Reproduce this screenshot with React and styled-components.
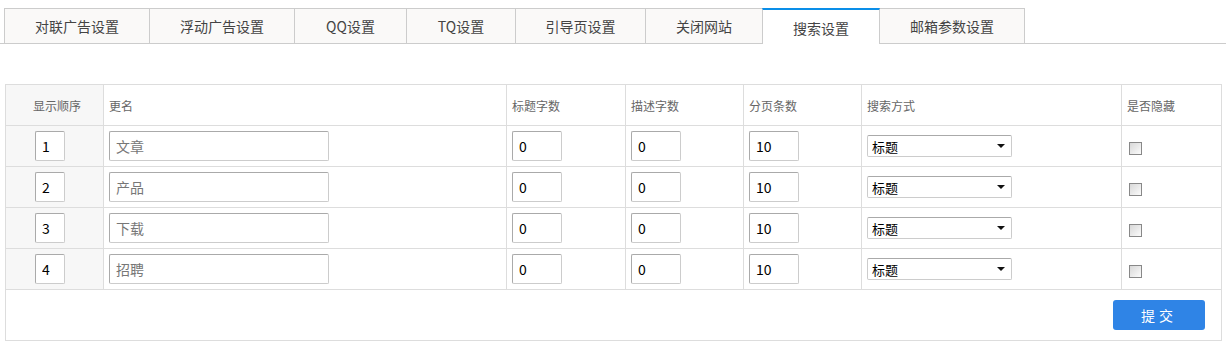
import React from 'react';
import styled, { createGlobalStyle } from 'styled-components';

const GlobalStyle = createGlobalStyle`
  body {
    margin: 0;
    background: #fff;
    font-family: "Microsoft YaHei", "Noto Sans CJK SC", "Noto Sans", sans-serif;
  }
`;

const TABS = [
  { label: '对联广告设置', width: 146 },
  { label: '浮动广告设置', width: 146 },
  { label: 'QQ设置', width: 113 },
  { label: 'TQ设置', width: 110 },
  { label: '引导页设置', width: 131 },
  { label: '关闭网站', width: 118 },
  { label: '搜索设置', width: 118, active: true },
  { label: '邮箱参数设置', width: 146 },
];

const ROWS = [
  { order: 1, name: '文章' },
  { order: 2, name: '产品' },
  { order: 3, name: '下载' },
  { order: 4, name: '招聘' },
];

const COLS = [98, 403, 119, 118, 118, 260, 100];

const Page = styled.div`
  padding-top: 8px;
`;

const TabBar = styled.div`
  display: flex;
  padding-left: 4px;
  border-bottom: 1px solid #ccc;
  height: 35px;
`;

const Tab = styled.div`
  box-sizing: border-box;
  width: ${p => p.w}px;
  height: ${p => (p.active ? 36 : 35)}px;
  margin-left: -1px;
  display: flex;
  align-items: center;
  justify-content: center;
  font-size: 14px;
  color: #444;
  background: ${p => (p.active ? '#fff' : '#faf9f8')};
  border: 1px solid #ccc;
  border-top: ${p => (p.active ? '2px solid #0a8ee8' : '1px solid #ccc')};
  border-bottom: none;
  padding-top: ${p => (p.active ? 2 : 0)}px;
  position: relative;
  z-index: ${p => (p.active ? 1 : 0)};
  &:first-child {
    margin-left: 0;
  }
`;

const Table = styled.table`
  margin: 40px 0 0 5px;
  border-collapse: collapse;
  table-layout: fixed;
  width: 1216px;
  font-size: 12px;
  color: #666;
`;

const Th = styled.th`
  height: 40px;
  border: 1px solid #ddd;
  font-weight: normal;
  text-align: ${p => (p.center ? 'center' : 'left')};
  padding: 0 0 0 5px;
  background: ${p => (p.gray ? '#f7f7f7' : '#fff')};
`;

const Td = styled.td`
  height: 40px;
  border: 1px solid #ddd;
  padding: 0 0 0 ${p => (p.gray ? 29 : 5)}px;
  text-align: left;
  background: ${p => (p.gray ? '#f7f7f7' : '#fff')};
  vertical-align: middle;
`;

const TextInput = styled.input`
  box-sizing: border-box;
  width: ${p => p.w}px;
  height: 30px;
  border: 1px solid #ccc;
  border-top-color: #aaa;
  border-left-color: #aaa;
  border-radius: 2px;
  padding: 0 6px;
  font-size: 14px;
  font-family: "Noto Sans CJK SC", sans-serif;
  color: ${p => (p.muted ? '#777' : '#000')};
  background: #fff;
  outline: none;
  display: block;
`;

const SelectBox = styled.div`
  box-sizing: border-box;
  width: 145px;
  height: 22px;
  border: 1px solid #ccc;
  border-top-color: #aaa;
  border-radius: 2px;
  display: flex;
  align-items: center;
  justify-content: space-between;
  padding: 0 6px 0 4px;
  font-size: 13px;
  color: #000;
  background: #fff;
`;

const Caret = styled.span`
  width: 0;
  height: 0;
  border-left: 4px solid transparent;
  border-right: 4px solid transparent;
  border-top: 4px solid #111;
`;

const CheckBox = styled.span`
  display: inline-block;
  box-sizing: border-box;
  width: 13px;
  height: 13px;
  margin-left: 2px;
  border: 1px solid #888;
  background: linear-gradient(135deg, #d8d8d8, #fbfbfb);
  vertical-align: middle;
`;

const Footer = styled.td`
  height: 50px;
  border: 1px solid #ddd;
  padding: 0 16px 0 0;
  text-align: right;
`;

const Submit = styled.button`
  width: 92px;
  height: 30px;
  border: none;
  border-radius: 3px;
  background: #2f84e6;
  color: #fff;
  font-size: 14px;
  letter-spacing: 4px;
  padding-left: 6px;
  font-family: "Noto Sans CJK SC", sans-serif;
  vertical-align: middle;
`;

export default function App() {
  return (
    <Page>
      <GlobalStyle />
      <TabBar>
        {TABS.map(t => (
          <Tab key={t.label} w={t.width} active={t.active}>
            {t.label}
          </Tab>
        ))}
      </TabBar>
      <Table>
        <colgroup>
          {COLS.map((w, i) => (
            <col key={i} style={{ width: w }} />
          ))}
        </colgroup>
        <thead>
          <tr>
            <Th center gray>显示顺序</Th>
            <Th>更名</Th>
            <Th>标题字数</Th>
            <Th>描述字数</Th>
            <Th>分页条数</Th>
            <Th>搜索方式</Th>
            <Th>是否隐藏</Th>
          </tr>
        </thead>
        <tbody>
          {ROWS.map(r => (
            <tr key={r.order}>
              <Td gray>
                <TextInput w={30} defaultValue={r.order} />
              </Td>
              <Td>
                <TextInput w={220} muted defaultValue={r.name} />
              </Td>
              <Td>
                <TextInput w={50} defaultValue="0" />
              </Td>
              <Td>
                <TextInput w={50} defaultValue="0" />
              </Td>
              <Td>
                <TextInput w={50} defaultValue="10" />
              </Td>
              <Td>
                <SelectBox>
                  标题
                  <Caret />
                </SelectBox>
              </Td>
              <Td>
                <CheckBox />
              </Td>
            </tr>
          ))}
          <tr>
            <Footer colSpan={7}>
              <Submit>提交</Submit>
            </Footer>
          </tr>
        </tbody>
      </Table>
    </Page>
  );
}
